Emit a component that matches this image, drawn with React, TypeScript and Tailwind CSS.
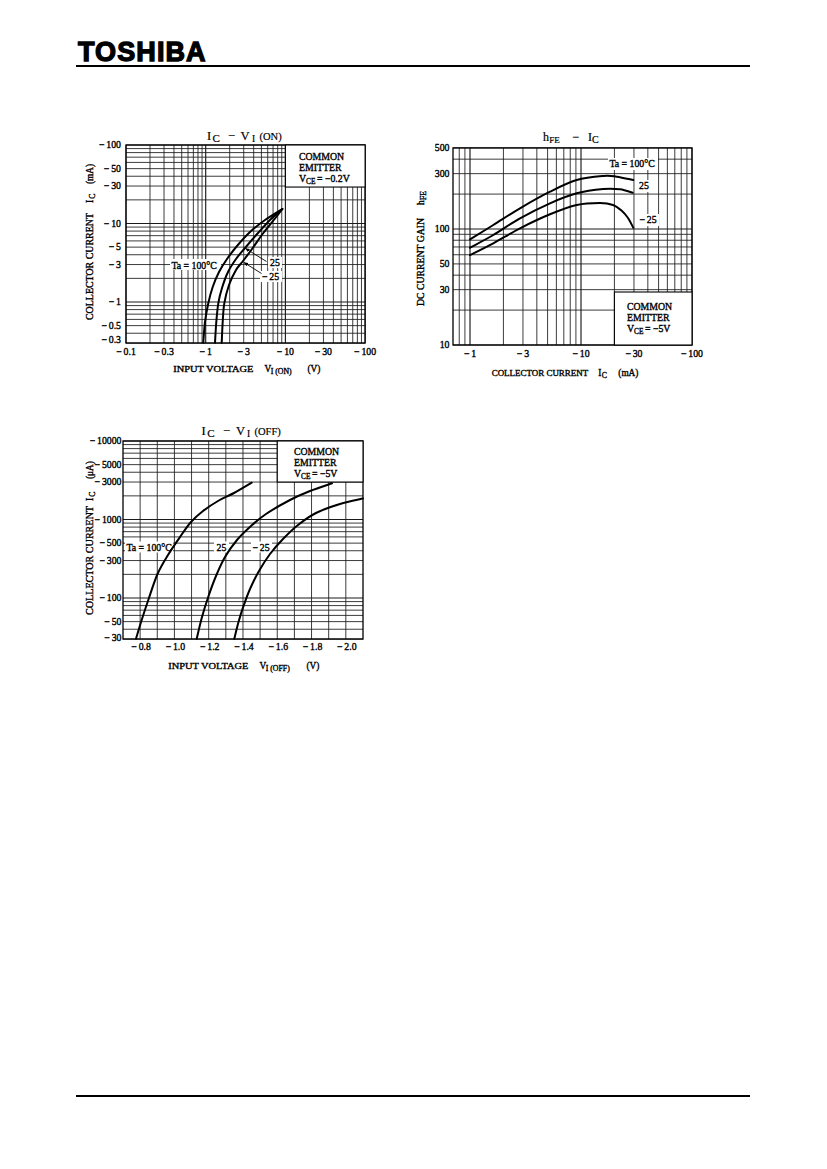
import React from "react";

type P = [number, number];
const lg = Math.log10;
const SERIF = "'Liberation Serif', 'Times New Roman', serif";
const SW = 0.35;

function smooth(pts: P[]): string {
  let d = `M${pts[0][0]},${pts[0][1]}`;
  for (let i = 0; i < pts.length - 1; i++) {
    const p0 = pts[i - 1] || pts[i];
    const p1 = pts[i];
    const p2 = pts[i + 1];
    const p3 = pts[i + 2] || p2;
    const c1x = p1[0] + (p2[0] - p0[0]) / 6;
    const c1y = p1[1] + (p2[1] - p0[1]) / 6;
    const c2x = p2[0] - (p3[0] - p1[0]) / 6;
    const c2y = p2[1] - (p3[1] - p1[1]) / 6;
    d += ` C${c1x.toFixed(2)},${c1y.toFixed(2)} ${c2x.toFixed(2)},${c2y.toFixed(2)} ${p2[0]},${p2[1]}`;
  }
  return d;
}

function Neg({ x, y, t, anchor = "middle", size = 9.8 }: { x: number; y: number; t: string; anchor?: string; size?: number }) {
  return (
    <text x={x} y={y} textAnchor={anchor as any} fontSize={size} fontFamily={SERIF} fill="#000" stroke="#000" strokeWidth={SW}>
      <tspan>−</tspan>
      <tspan dx={1.8}>{t}</tspan>
    </text>
  );
}

function Num({ x, y, t, anchor = "end", size = 9.8 }: { x: number; y: number; t: string; anchor?: string; size?: number }) {
  return (
    <text x={x} y={y} textAnchor={anchor as any} fontSize={size} fontFamily={SERIF} fill="#000" stroke="#000" strokeWidth={SW}>
      {t}
    </text>
  );
}

function Txt({ x, y, size, len, children }: { x: number; y: number; size: number; len?: number; children: React.ReactNode }) {
  return (
    <text
      x={x}
      y={y}
      fontSize={size}
      fontFamily={SERIF}
      fill="#000"
      stroke="#000"
      strokeWidth={SW}
      {...(len ? { textLength: len, lengthAdjust: "spacingAndGlyphs" } : {})}
    >
      {children}
    </text>
  );
}

function Grid({ xs, ys, L, R, T, B, major }: { xs: number[]; ys: number[]; L: number; R: number; T: number; B: number; major: (v: number, axis: "x" | "y") => boolean; }) {
  return (
    <g>
      {xs.map((x, i) => (
        <line key={"x" + i} x1={x} x2={x} y1={T} y2={B} stroke="#1a1a1a" strokeWidth={major(i, "x") ? 1.15 : 0.85} />
      ))}
      {ys.map((y, i) => (
        <line key={"y" + i} x1={L} x2={R} y1={y} y2={y} stroke="#1a1a1a" strokeWidth={major(i, "y") ? 1.15 : 0.85} />
      ))}
    </g>
  );
}

function Curve({ pts }: { pts: P[] }) {
  return <path d={smooth(pts)} fill="none" stroke="#000" strokeWidth={2} strokeLinecap="round" />;
}

function Legend({ x, y, w, h, tx, b1, vce }: { x: number; y: number; w: number; h: number; tx: number; b1: number; vce: string }) {
  return (
    <g>
      <rect x={x} y={y} width={w} height={h} fill="#fff" stroke="#000" strokeWidth={1.1} />
      <Txt x={tx} y={b1} size={9.8}>COMMON</Txt>
      <Txt x={tx} y={b1 + 11} size={9.8}>EMITTER</Txt>
      <text x={tx} y={b1 + 22} fontSize={9.8} fontFamily={SERIF} stroke="#000" strokeWidth={SW}>
        <tspan>V</tspan>
        <tspan fontSize={7.3} dy={2}>CE</tspan>
        <tspan dy={-2} dx={1.5}>{"= " + vce}</tspan>
      </text>
    </g>
  );
}

function Chart1() {
  const X = (v: number) => 126 + 79.7 * lg(v / 0.1);
  const Y = (i: number) => 302 - 78.5 * lg(i);
  const xv: number[] = [];
  for (const d of [0.1, 1, 10]) for (let k = 1; k <= 9; k++) xv.push(k * d);
  xv.push(100);
  const yv: number[] = [];
  for (let k = 3; k <= 9; k++) yv.push(k * 0.1);
  for (const d of [1, 10]) for (let k = 1; k <= 9; k++) yv.push(k * d);
  yv.push(100);
  const L = X(0.1), R = X(100), T = Y(100), B = Y(0.3);
  const A: P[] = [[203.3, 342.7], [205, 322], [208.3, 303.3], [212.7, 287], [219, 272], [227, 259], [237, 246], [250, 232], [265, 220], [282.3, 209]];
  const Bc: P[] = [[215, 342.7], [216.3, 322], [218.3, 303.3], [222, 288], [228, 272], [236, 259], [245, 248], [258, 233], [271, 219], [282.3, 209]];
  const C: P[] = [[221.7, 342.7], [222.7, 322], [224.3, 303.3], [229, 285], [236, 270], [243, 261], [252, 249], [263.3, 233], [275, 218.5], [282.3, 209]];
  const yl: [number, string, number][] = [
    [100, "100", 3.2], [50, "50", 3.2], [30, "30", 3.2], [10, "10", 3.2], [5, "5", 3.2], [3, "3", 3.2], [1, "1", 3.2], [0.5, "0.5", 3.2], [0.3, "0.3", -0.3],
  ];
  return (
    <svg width={300} height={255} viewBox="80 125 300 255" className="block shrink-0">
      <defs>
        <marker id="arr1" viewBox="0 0 10 10" refX="9" refY="5" markerWidth="5" markerHeight="5" orient="auto">
          <path d="M0,1 L10,5 L0,9 z" fill="#000" />
        </marker>
      </defs>
      <Grid
        xs={xv.map(X)}
        ys={yv.map(Y)}
        L={L} R={R} T={T} B={B}
        major={(i, a) => (a === "x" ? [1, 10].includes(xv[i]) : [1, 10].includes(yv[i]))}
      />
      <rect x={L} y={T} width={R - L} height={B - T} fill="none" stroke="#000" strokeWidth={1.3} />
      <Legend x={X(10)} y={T} w={R - X(10)} h={Y(30) + 1 - T} tx={299} b1={160} vce="−0.2V" />
      <rect x={170} y={259} width={51} height={11} fill="#fff" />
      <rect x={268} y={257} width={14} height={11} fill="#fff" />
      <rect x={260} y={271} width={22} height={11} fill="#fff" />
      <Curve pts={A} />
      <Curve pts={Bc} />
      <Curve pts={C} />
      <Txt x={171.5} y={268.5} size={9.8}>Ta = 100°C</Txt>
      <line x1={266.5} y1={261.5} x2={245.5} y2={248.5} stroke="#000" strokeWidth={0.9} markerEnd="url(#arr1)" />
      <line x1={261.5} y1={273.5} x2={244} y2={262.5} stroke="#000" strokeWidth={0.9} markerEnd="url(#arr1)" />
      <Txt x={270} y={266} size={9.8}>25</Txt>
      <Neg x={262} y={279.5} t="25" anchor="start" />
      {yl.map(([v, t, o]) => (
        <Neg key={t} x={121} y={Y(v) + o} t={t} anchor="end" />
      ))}
      {[
        [0.1, "0.1"], [0.3, "0.3"], [1, "1"], [3, "3"], [10, "10"], [30, "30"], [100, "100"],
      ].map(([v, t]) => (
        <Neg key={t as string} x={X(v as number)} y={354.5} t={t as string} />
      ))}
      <text y={140} fontSize={12.5} fontFamily={SERIF} stroke="#000" strokeWidth={0.2}>
        <tspan x={207}>I</tspan>
        <tspan x={212.6} fontSize={11} dy={1.5}>C</tspan>
        <tspan x={228} dy={-1.5}>−</tspan>
        <tspan x={240.5}>V</tspan>
        <tspan x={252} fontSize={9.5} dy={1.5}>I</tspan>
        <tspan x={259.5} fontSize={10.5} dy={-1.5}>(ON)</tspan>
      </text>
      <Txt x={173.3} y={371.7} size={9} len={80}>INPUT VOLTAGE</Txt>
      <text y={371.7} fontSize={9.3} fontFamily={SERIF} stroke="#000" strokeWidth={SW}>
        <tspan x={264.5}>V</tspan>
        <tspan x={270.7} fontSize={7.8} dy={2.3}>I (ON)</tspan>
        <tspan x={307.5} dy={-2.3}>(V)</tspan>
      </text>
      <g transform="translate(93,320) rotate(-90)">
        <Txt x={0} y={0} size={9.3} len={107}>COLLECTOR CURRENT</Txt>
        <text y={0} fontSize={9.3} fontFamily={SERIF} stroke="#000" strokeWidth={SW}>
          <tspan x={117}>I</tspan>
          <tspan x={121.3} fontSize={7.8} dy={2}>C</tspan>
          <tspan x={136} dy={-2}>(mA)</tspan>
        </text>
      </g>
    </svg>
  );
}

function Chart2() {
  const X = (v: number) => 470 + 111 * lg(v);
  const Y = (h: number) => 345 - 116 * lg(h / 10);
  const xv: number[] = [0.8, 0.9];
  for (const d of [1, 10]) for (let k = 1; k <= 9; k++) xv.push(k * d);
  xv.push(100);
  const yv: number[] = [];
  for (let k = 1; k <= 9; k++) yv.push(k * 10);
  for (let k = 1; k <= 5; k++) yv.push(k * 100);
  const L = 453, R = X(100), T = Y(500), B = Y(10);
  const top: P[] = [[470, 239.3], [493.3, 225], [520, 208.3], [550, 191.7], [576.7, 180], [603.3, 176], [616.7, 176.7], [633.3, 180]];
  const mid: P[] = [[470, 247.7], [493.3, 235], [520, 218.3], [550, 203.3], [576.7, 193.3], [603.3, 189], [620, 189.3], [632.7, 192.7]];
  const bot: P[] = [[470, 255], [493.3, 243.3], [520, 228.3], [550, 214.3], [576.7, 205], [600, 203], [613, 205], [622, 211], [628, 218], [633.3, 227.7]];
  return (
    <svg width={305} height={260} viewBox="405 125 305 260" className="block shrink-0">
      <Grid
        xs={xv.map(X)}
        ys={yv.map(Y)}
        L={L} R={R} T={T} B={B}
        major={(i, a) => (a === "x" ? [1, 10].includes(xv[i]) : [100].includes(yv[i]))}
      />
      <rect x={L} y={T} width={R - L} height={B - T} fill="none" stroke="#000" strokeWidth={1.3} />
      <Legend x={X(20)} y={292} w={R - X(20)} h={B - 292} tx={627} b1={310} vce="−5V" />
      <rect x={608} y={158} width={50} height={12} fill="#fff" />
      <rect x={637} y={180} width={14} height={12} fill="#fff" />
      <rect x={637} y={214} width={22} height={12} fill="#fff" />
      <Curve pts={top} />
      <Curve pts={mid} />
      <Curve pts={bot} />
      <Txt x={609.5} y={167} size={9.8}>Ta = 100°C</Txt>
      <Txt x={639} y={189} size={9.8}>25</Txt>
      <Neg x={639.5} y={223} t="25" anchor="start" />
      {[
        [500, "500"], [300, "300"], [100, "100"], [50, "50"], [30, "30"], [10, "10"],
      ].map(([v, t]) => (
        <Num key={t as string} x={449.5} y={Y(v as number) + 3.2} t={t as string} />
      ))}
      {[
        [1, "1"], [3, "3"], [10, "10"], [30, "30"], [100, "100"],
      ].map(([v, t]) => (
        <Neg key={t as string} x={X(v as number)} y={357} t={t as string} />
      ))}
      <text y={141} fontSize={12} fontFamily={SERIF} stroke="#000" strokeWidth={0.2}>
        <tspan x={543}>h</tspan>
        <tspan x={549.3} fontSize={9} dy={1.5}>FE</tspan>
        <tspan x={572.5} dy={-1.5}>−</tspan>
        <tspan x={588}>I</tspan>
        <tspan x={592} fontSize={10} dy={1.5}>C</tspan>
      </text>
      <Txt x={491.7} y={375.5} size={8.8} len={96.5}>COLLECTOR CURRENT</Txt>
      <text y={375.5} fontSize={9.3} fontFamily={SERIF} stroke="#000" strokeWidth={SW}>
        <tspan x={598.3}>I</tspan>
        <tspan x={601.7} fontSize={7.8} dy={2.3}>C</tspan>
        <tspan x={618.3} dy={-2.3}>(mA)</tspan>
      </text>
      <g transform="translate(424,306) rotate(-90)">
        <Txt x={0} y={0} size={9.3} len={88}>DC CURRENT GAIN</Txt>
        <text y={0} fontSize={9.3} fontFamily={SERIF} stroke="#000" strokeWidth={SW}>
          <tspan x={101}>h</tspan>
          <tspan x={106} fontSize={7.8} dy={2}>FE</tspan>
        </text>
      </g>
    </svg>
  );
}

function Chart3() {
  const X = (v: number) => 123 + 171.4 * (v - 0.7);
  const Y = (i: number) => 441 + 78.5 * (4 - lg(i));
  const xv: number[] = [];
  for (let k = 8; k <= 20; k++) xv.push(k / 10);
  const yv: number[] = [];
  for (let k = 3; k <= 9; k++) yv.push(k * 10);
  for (const d of [100, 1000]) for (let k = 1; k <= 9; k++) yv.push(k * d);
  yv.push(10000);
  const L = 123, R = 363, T = Y(10000), B = Y(30);
  const A: P[] = [[136, 638.7], [142, 619], [148.3, 600], [157.5, 574], [168, 555], [180, 537], [191, 522], [203, 511], [218, 501], [234, 493], [251.7, 482.7]];
  const Bc: P[] = [[196.7, 638.7], [202, 617], [208.3, 596.7], [216, 576], [225, 557], [237, 540], [251, 526], [266, 514], [290, 500], [310, 491], [332, 483.3]];
  const C: P[] = [[234.3, 638.7], [238.5, 622], [243.3, 606.7], [250, 589], [259, 571], [270, 554], [283, 539], [298, 525], [316, 513], [340, 504], [363, 498.5]];
  const yl: [number, string, number][] = [
    [10000, "10000", 3.2], [5000, "5000", 3.2], [3000, "3000", 3.2], [1000, "1000", 3.2], [500, "500", 3.2], [300, "300", 3.2], [100, "100", 3.2], [50, "50", 3.2], [30, "30", 1.5],
  ];
  return (
    <svg width={290} height={260} viewBox="80 420 290 260" className="block shrink-0">
      <Grid
        xs={xv.map(X)}
        ys={yv.map(Y)}
        L={L} R={R} T={T} B={B}
        major={(i, a) => (a === "x" ? false : [100, 1000].includes(yv[i]))}
      />
      <rect x={L} y={T} width={R - L} height={B - T} fill="none" stroke="#000" strokeWidth={1.3} />
      <Legend x={X(1.6)} y={T} w={R - X(1.6)} h={Y(3000) - T} tx={294} b1={455} vce="−5V" />
      <rect x={125} y={541.5} width={48} height={11} fill="#fff" />
      <rect x={214} y={541.5} width={15} height={11} fill="#fff" />
      <rect x={251} y={541.5} width={21} height={11} fill="#fff" />
      <Curve pts={A} />
      <Curve pts={Bc} />
      <Curve pts={C} />
      <Txt x={126.5} y={550.5} size={9.8}>Ta = 100°C</Txt>
      <Txt x={216.5} y={550.5} size={9.8}>25</Txt>
      <Neg x={252.5} y={550.5} t="25" anchor="start" />
      {yl.map(([v, t, o]) => (
        <Neg key={t} x={121.5} y={Y(v) + o} t={t} anchor="end" />
      ))}
      {[
        [0.8, "0.8"], [1.0, "1.0"], [1.2, "1.2"], [1.4, "1.4"], [1.6, "1.6"], [1.8, "1.8"], [2.0, "2.0"],
      ].map(([v, t]) => (
        <Neg key={t as string} x={X(v as number) + 1} y={650} t={t as string} />
      ))}
      <text y={435} fontSize={12.5} fontFamily={SERIF} stroke="#000" strokeWidth={0.2}>
        <tspan x={201.5}>I</tspan>
        <tspan x={207.2} fontSize={11} dy={1.5}>C</tspan>
        <tspan x={223} dy={-1.5}>−</tspan>
        <tspan x={236}>V</tspan>
        <tspan x={247} fontSize={9.5} dy={1.5}>I</tspan>
        <tspan x={254.5} fontSize={10.5} dy={-1.5}>(OFF)</tspan>
      </text>
      <Txt x={168.3} y={668.7} size={9} len={80}>INPUT VOLTAGE</Txt>
      <text y={668.7} fontSize={9.3} fontFamily={SERIF} stroke="#000" strokeWidth={SW}>
        <tspan x={259.5}>V</tspan>
        <tspan x={265.7} fontSize={7.8} dy={2.3}>I (OFF)</tspan>
        <tspan x={306.5} dy={-2.3}>(V)</tspan>
      </text>
      <g transform="translate(93,615) rotate(-90)">
        <Txt x={0} y={0} size={9.3} len={109}>COLLECTOR CURRENT</Txt>
        <text y={0} fontSize={9.3} fontFamily={SERIF} stroke="#000" strokeWidth={SW}>
          <tspan x={114}>I</tspan>
          <tspan x={118.3} fontSize={7.8} dy={2}>C</tspan>
          <tspan x={136} dy={-2}>(μA)</tspan>
        </text>
      </g>
    </svg>
  );
}

export default function App() {
  return (
    <div className="w-[827px] h-[1169px] bg-white flex flex-col overflow-hidden">
      <header className="pt-[40px] pl-[78px]">
        <div className="font-['Liberation_Sans',Arial,sans-serif] font-black text-[27px] leading-[25px] tracking-[1.1px] text-black [-webkit-text-stroke:1.3px_#000]">
          TOSHIBA
        </div>
      </header>
      <div className="ml-[76px] mr-[77px] h-[1.5px] bg-black" />
      <main className="mt-[58.5px] pl-[80px] flex flex-col gap-[35px]">
        <div className="flex gap-[25px]">
          <Chart1 />
          <Chart2 />
        </div>
        <div className="flex">
          <Chart3 />
        </div>
      </main>
      <div className="mt-auto mb-[72.5px] ml-[76px] mr-[77px] h-[1.5px] bg-black" />
    </div>
  );
}
